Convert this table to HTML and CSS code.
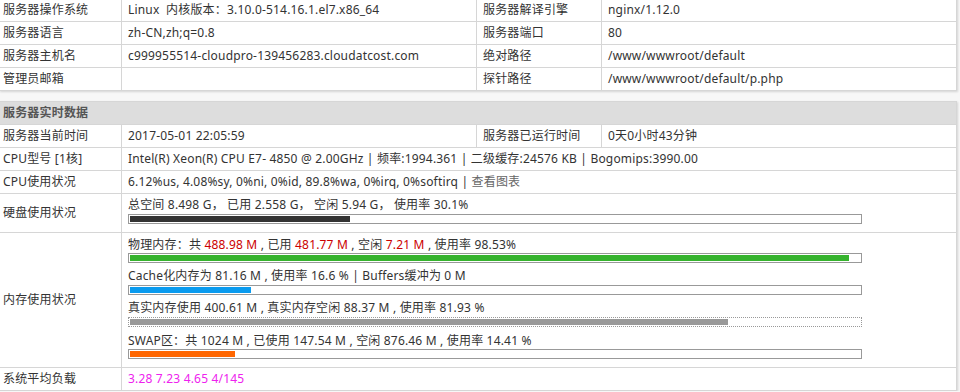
FILE: index.html
```html
<!DOCTYPE html>
<html lang="zh-CN">
<head>
<meta charset="utf-8">
<title>服务器探针</title>
<link rel="stylesheet" href="styles.css">
</head>
<body>
<table class="info info-top">
  <colgroup><col class="c1"><col class="c2"><col class="c3"><col class="c4"></colgroup>
  <tr><td>服务器操作系统</td><td>Linux &nbsp;内核版本<span class="colon">：</span>3.10.0-514.16.1.el7.x86_64</td><td>服务器解译引擎</td><td>nginx/1.12.0</td></tr>
  <tr><td>服务器语言</td><td>zh-CN,zh;q=0.8</td><td>服务器端口</td><td>80</td></tr>
  <tr><td>服务器主机名</td><td>c999955514-cloudpro-139456283.cloudatcost.com</td><td>绝对路径</td><td>/www/wwwroot/default</td></tr>
  <tr><td>管理员邮箱</td><td></td><td>探针路径</td><td>/www/wwwroot/default/p.php</td></tr>
</table>

<table class="info info-live">
  <colgroup><col class="c1"><col class="c2"><col class="c3"><col class="c4"></colgroup>
  <tr><th colspan="4">服务器实时数据</th></tr>
  <tr><td>服务器当前时间</td><td>2017-05-01 22:05:59</td><td>服务器已运行时间</td><td>0天0小时43分钟</td></tr>
  <tr><td>CPU型号 [1核]</td><td colspan="3">Intel(R) Xeon(R) CPU E7- 4850 @ 2.00GHz | 频率:1994.361 | 二级缓存:24576 KB | Bogomips:3990.00</td></tr>
  <tr><td>CPU使用状况</td><td colspan="3">6.12%us, 4.08%sy, 0%ni, 0%id, 89.8%wa, 0%irq, 0%softirq | <span class="link">查看图表</span></td></tr>
  <tr><td>硬盘使用状况</td><td colspan="3" class="bars">
    <div class="block">
      <div class="line">总空间 8.498 G， 已用 2.558 G， 空闲 5.94 G， 使用率 30.1%</div>
      <div class="bar"><div class="fill fill-dark" style="width:30.1%"></div></div>
    </div>
  </td></tr>
  <tr><td>内存使用状况</td><td colspan="3" class="bars">
    <div class="block">
      <div class="line">物理内存<span class="colon">：</span>共 <span class="red">488.98 M</span> , 已用 <span class="red">481.77 M</span> , 空闲 <span class="red">7.21 M</span> , 使用率 98.53%</div>
      <div class="bar"><div class="fill fill-green" style="width:98.53%"></div></div>
    </div>
    <div class="block">
      <div class="line">Cache化内存为 81.16 M , 使用率 16.6 % | Buffers缓冲为 0 M</div>
      <div class="bar"><div class="fill fill-blue" style="width:16.6%"></div></div>
    </div>
    <div class="block">
      <div class="line">真实内存使用 400.61 M , 真实内存空闲 88.37 M , 使用率 81.93 %</div>
      <div class="bar bar-dotted"><div class="fill fill-gray" style="width:81.93%"></div></div>
    </div>
    <div class="block">
      <div class="line">SWAP区<span class="colon">：</span>共 1024 M , 已使用 147.54 M , 空闲 876.46 M , 使用率 14.41 %</div>
      <div class="bar"><div class="fill fill-orange" style="width:14.41%"></div></div>
    </div>
  </td></tr>
  <tr><td>系统平均负载</td><td colspan="3" class="load">3.28 7.23 4.65 4/145</td></tr>
</table>
</body>
</html>
```
FILE: styles.css
```css
html, body {
  margin: 0;
  padding: 0;
}
body {
  background: #f7f7f7;
  color: #333;
  font-family: "Noto Sans", "Noto Sans CJK SC", sans-serif;
  font-size: 12px;
  line-height: 18px;
  letter-spacing: 0.18px;
}
.info {
  width: 957px;
  margin-left: -1px;
  border-collapse: collapse;
  table-layout: fixed;
  background: #fff;
  border: 1px solid #cfcfcf;
  box-shadow: 1px 1px 2px rgba(0, 0, 0, 0.14);
}
.info-top {
  margin-top: -3px;
}
.info-live {
  margin-top: 10px;
}
.c1 { width: 122px; }
.c2 { width: 355px; }
.c3 { width: 125px; }
.c4 { width: 355px; }
.info td,
.info th {
  border: 1px solid #d6d6d6;
  padding: 2px 6px;
  line-height: 18px;
  text-align: left;
  vertical-align: middle;
  white-space: nowrap;
  overflow: hidden;
}
.info th {
  background: #dddddd;
  color: #555;
  font-weight: bold;
  padding-left: 3px;
}
.info td:first-child {
  padding-left: 3px;
}
.info td.bars {
  padding: 2px 6px 4px;
}
.colon {
  font-family: "Noto Sans CJK TC", "Noto Sans CJK SC", sans-serif;
}
.block {
  margin-bottom: 4px;
}
.line {
  height: 18px;
}
.bar {
  width: 730px;
  height: 6px;
  padding: 1px;
  border: 1px solid #999;
  background: #fff;
}
.bar-dotted {
  border-style: dotted;
}
.fill {
  height: 6px;
}
.fill-dark { background: #333; }
.fill-green { background: #36b32e; }
.fill-blue { background: #0a9bef; }
.fill-gray { background: #999; }
.fill-orange { background: #ff6600; }
.red { color: #cc0000; }
.link { color: #666; }
.load { color: #ee22ee; }
```
